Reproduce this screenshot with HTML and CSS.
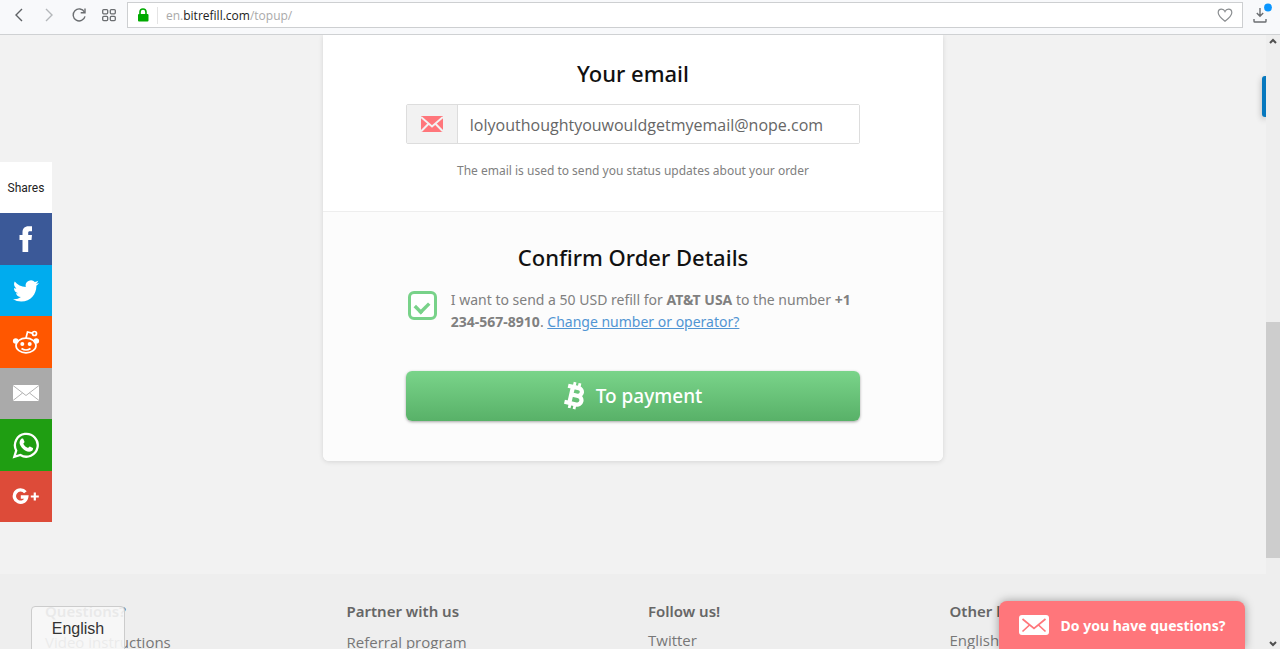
FILE: index.html
```html
<!DOCTYPE html>
<html lang="en">
<head>
<meta charset="utf-8">
<title>Bitrefill top up</title>
<link rel="stylesheet" href="styles.css">
</head>
<body>
<header class="toolbar">
  <nav class="nav-buttons" aria-label="Browser">
    <button class="tool" aria-label="Back"><svg width="16" height="16" viewBox="0 0 16 16"><path d="M11 2 5 8l6 6" fill="none" stroke="#5f6265" stroke-width="1.4"/></svg></button>
    <button class="tool" aria-label="Forward"><svg width="16" height="16" viewBox="0 0 16 16"><path d="m5 2 6 6-6 6" fill="none" stroke="#b4b7ba" stroke-width="1.4"/></svg></button>
    <button class="tool" aria-label="Reload"><svg width="16" height="16" viewBox="0 0 16 16"><path d="M13.4 5A6 6 0 1 0 14 9.3" fill="none" stroke="#6b6e71" stroke-width="1.4"/><path d="M14 1.5v4.300H9.700" fill="none" stroke="#6b6e71" stroke-width="1.4"/></svg></button>
    <button class="tool" aria-label="Speed dial"><svg width="16" height="16" viewBox="0 0 16 16" fill="none" stroke="#6b6e71" stroke-width="1.3"><rect x="1.700" y="2.600" width="5" height="4.200" rx="1"/><rect x="9.300" y="2.600" width="5" height="4.200" rx="1"/><rect x="1.700" y="9.400" width="5" height="4.200" rx="1"/><rect x="9.300" y="9.400" width="5" height="4.200" rx="1"/></svg></button>
  </nav>
  <div class="address">
    <svg width="12" height="14" viewBox="0 0 12 14"><path d="M3 7V4a3 3 0 0 1 6 0v3" fill="none" stroke="#0a0" stroke-width="1.6"/><rect x="1" y="6" width="10.500" height="7.500" rx="1" fill="#0a0"/></svg>
    <span class="url">en.<b>bitrefill.com</b>/topup/</span>
    <button class="tool" aria-label="Bookmark"><svg width="16" height="16" viewBox="0 0 16 16"><path d="M8 14.300C4.500 11.500 1.200 8.800 1.200 5.700 1.200 3.600 2.700 2.200 4.500 2.200 6 2.200 7.300 3 8 4.500 8.700 3 10 2.200 11.500 2.200c1.800 0 3.300 1.400 3.300 3.500 0 3.100-3.300 5.800-6.800 8.600z" fill="none" stroke="#8b8e91" stroke-width="1.2"/></svg></button>
  </div>
  <button class="tool downloads" aria-label="Downloads"><svg width="22" height="24" viewBox="0 0 22 24"><path d="M8 5v8M4.800 10 8 13.200 11.200 10M2 16v2.200q0 .8.800.8h10.400q.8 0 .8-.8V16" fill="none" stroke="#6b6e71" stroke-width="1.4"/><circle cx="16" cy="4.500" r="3.900" fill="#0a96ff"/></svg></button>
</header>

<div class="window">
  <div class="page">
    <main class="main">
      <form class="card">
        <section class="section">
          <h2><label for="email">Your email</label></h2>
          <div class="field">
            <span class="field-icon"><svg width="22" height="16" viewBox="0 0 22 16"><path d="M0 0h22v16H0z" fill="#ff767b"/><path d="M0 1 11 10.500 22 1M0 15.500 7.300 8M22 15.500 14.700 8" fill="none" stroke="#f2f2f2" stroke-width="2"/></svg></span>
            <input class="email" id="email" type="email" value="lolyouthoughtyouwouldgetmyemail@nope.com">
          </div>
          <p class="help">The email is used to send you status updates about your order</p>
        </section>
        <section class="section confirm">
          <h2>Confirm Order Details</h2>
          <div class="agree">
            <input class="check" id="agree" type="checkbox" checked>
            <p><label for="agree">I want to send a 50 USD refill for <b>AT&amp;T USA</b> to the number <b>+1 234-567-8910</b>.</label> <a href="#number">Change number or operator?</a></p>
          </div>
          <button class="pay" type="button">
            <svg width="22" height="30" viewBox="0 0 22 30"><g transform="rotate(13 11 15)" fill="none" stroke="#fff"><path d="M8 1.500v5M13 1.500v5M8 23v5M13 23v5" stroke-width="2.800"/><path d="M2 6.500H13a3.800 3.800 0 0 1 0 7.800H7M13 14.300h1a4.300 4.300 0 0 1 0 8.700H2M7 6.500V23" stroke-width="4.200"/></g></svg>
            <span>To payment</span>
          </button>
        </section>
      </form>
    </main>
    <footer class="footer">
      <section><h3>Questions?</h3><a class="low" href="#video">Video instructions</a></section>
      <section><h3>Partner with us</h3><a class="low" href="#referral">Referral program</a></section>
      <section><h3>Follow us!</h3><a href="#twitter">Twitter</a></section>
      <section><h3>Other languages</h3><a href="#english">English</a></section>
    </footer>

    <aside class="share" aria-label="Shares">
      <span class="share-label">Shares</span>
      <a class="facebook" href="#facebook" aria-label="Facebook"><svg width="28" height="28" viewBox="0 0 28 28"><path d="M10.500 27V15H7.500v-5h3V7.500C10.500 3.500 12.700 1.300 16.500 1.300H20v5h-2.200c-1.300 0-1.600.600-1.600 1.700v2h3.800l-.5 5h-3.300v12z" fill="#fff"/></svg></a>
      <a class="twitter" href="#tweet" aria-label="Twitter"><svg width="26" height="26" viewBox="0 0 24 24"><path d="M23.950 4.570a10 10 0 0 1-2.820.770 4.960 4.960 0 0 0 2.160-2.720c-.950.550-2 .960-3.130 1.180a4.920 4.920 0 0 0-8.380 4.480C7.690 8.100 4.070 6.130 1.640 3.160a4.820 4.820 0 0 0-.670 2.480c0 1.710.870 3.210 2.190 4.100a4.900 4.900 0 0 1-2.230-.620v.060a4.920 4.920 0 0 0 3.950 4.830 5 5 0 0 1-2.210.080 4.940 4.940 0 0 0 4.600 3.420A9.870 9.870 0 0 1 0 19.540a14 14 0 0 0 7.550 2.210c9.050 0 14-7.500 14-13.980 0-.210 0-.420-.020-.630a9.940 9.940 0 0 0 2.460-2.550z" fill="#fff"/></svg></a>
      <a class="reddit" href="#reddit" aria-label="Reddit"><svg width="28" height="28" viewBox="0 0 28 28"><g fill="none" stroke="#fff" stroke-width="1.700"><ellipse cx="14" cy="17.500" rx="10" ry="7.300"/><path d="M14 10l1.500-6 5.500 1.300"/><circle cx="22.500" cy="5.500" r="2"/><path d="M9.500 20.500q4.500 3 9 0"/></g><g fill="#fff"><circle cx="3.700" cy="13" r="2.800"/><circle cx="24.300" cy="13" r="2.800"/><circle cx="10.300" cy="16" r="2"/><circle cx="17.700" cy="16" r="2"/></g></svg></a>
      <a class="mail" href="#mail" aria-label="Email"><svg width="26" height="16" viewBox="0 0 26 16"><path d="M0 0h26v16H0z" fill="#fff"/><path d="M0 .5 13 10.500 26 .5M0 15.500 9.500 8M26 15.500 16.500 8" fill="none" stroke="#aaa" stroke-width=".9"/></svg></a>
      <a class="whatsapp" href="#whatsapp" aria-label="WhatsApp"><svg width="28" height="28" viewBox="0 0 28 28"><path d="M2.300 25.800 4.200 19.500A11.400 11.400 0 1 1 8.400 24z" fill="none" stroke="#fff" stroke-width="2.300"/><path d="M8.200 9.200c.8-1.500 2-2 3-1.400l1.300 3c.2.600-.8 1.500-1.200 2 1.200 2.300 2.700 3.500 4.800 4.300.6-.6 1.200-1.700 1.800-1.600l3 1.400c.5.300-.1 2.200-.8 2.800-3.200 2.300-7.200.100-9.400-2.200-2-2-4.200-5.200-2.500-8.300z" fill="#fff"/></svg></a>
      <a class="google" href="#google" aria-label="Google Plus"><svg width="28" height="20" viewBox="0 0 28 20"><path d="M13.400 6.200A6.200 6.200 0 1 0 14.700 11H8.800" fill="none" stroke="#fff" stroke-width="3.400"/><path d="M22.800 6.500v8M18.800 10.500h8" stroke="#fff" stroke-width="2.200"/></svg></a>
    </aside>
    <span class="tab"></span>
    <button class="language">English</button>
    <button class="chat"><svg width="30" height="20" viewBox="0 0 30 20"><rect width="30" height="20" rx="3" fill="#fff"/><path d="M3.500 4 15 13.500 26.500 4M3.500 16.500 10.500 10M26.500 16.500 19.500 10" fill="none" stroke="#ff767b" stroke-width="1.700"/></svg><span>Do you have questions?</span></button>
  </div>
  <div class="scrollbar" aria-hidden="true">
    <svg width="8" height="7" viewBox="0 0 8 7"><path d="M1 5 4 2l3 3" fill="none" stroke="#505050" stroke-width="2"/></svg>
    <div class="track"><div class="thumb"></div></div>
    <svg width="8" height="7" viewBox="0 0 8 7"><path d="m1 2 3 3 3-3" fill="none" stroke="#505050" stroke-width="2"/></svg>
  </div>
</div>
</body>
</html>
```
FILE: styles.css
```css
* { box-sizing: border-box; }
body {
  margin: 0;
  height: 100vh;
  display: flex;
  flex-direction: column;
  overflow: hidden;
  font-family: "Noto Sans", sans-serif;
  font-size: 14px;
  color: #808080;
  background: #f2f2f2;
}
h2, h3, p { margin: 0; }
button { font: inherit; border: 0; cursor: pointer; }
svg { display: block; flex: none; }

.toolbar {
  display: flex;
  align-items: center;
  flex: none;
  height: 35px;
  padding: 0 6px 4px 11px;
  background: #f8f9fb;
  border-bottom: 1px solid #cfd1d3;
}
.nav-buttons { display: flex; gap: 14px; margin-right: 10px; }
.tool { padding: 0; background: none; }
.address {
  flex: 1;
  display: flex;
  align-items: center;
  height: 26px;
  padding: 0 9px;
  background: #fff;
  border: 1px solid #cdcfd1;
}
.url {
  flex: 1;
  margin-left: 8px;
  padding-left: 8px;
  border-left: 1px solid #e4e4e4;
  font-family: "Open Sans", sans-serif;
  font-size: 12px;
  line-height: 17px;
  color: #aaa;
}
.url b { font-weight: 400; color: #222; }
.downloads { margin-left: 9px; }

.window { flex: 1; display: flex; min-height: 0; }
.page {
  position: relative;
  flex: 1;
  display: flex;
  flex-direction: column;
  overflow: hidden;
}
.main { flex: none; padding-bottom: 113px; }
.card {
  width: 49%;
  margin: 0 auto;
  background: #fff;
  border-radius: 0 0 6px 6px;
  box-shadow: 0 1px 5px rgba(0, 0, 0, .12);
}
.section { padding: 22px 83px 30px; }
.confirm {
  padding: 29px 83px 40px;
  background: #fcfcfc;
  border-top: 1px solid #eee;
  border-radius: 0 0 6px 6px;
}
h2 {
  font-size: 22px;
  line-height: 32px;
  font-weight: 500;
  text-align: center;
  color: #111;
}
.field {
  display: flex;
  height: 40px;
  margin-top: 15px;
  border: 1px solid #ddd;
  border-radius: 2px;
}
.field-icon {
  display: flex;
  justify-content: center;
  align-items: center;
  width: 51px;
  background: #f2f2f2;
  border-right: 1px solid #ddd;
}
.email {
  flex: 1;
  min-width: 0;
  padding: 1px 12px 0;
  border: 0;
  outline: 0;
  font: 16px "Open Sans", sans-serif;
  color: #666;
}
.help { margin-top: 17px; font-size: 12px; line-height: 20px; text-align: center; }
.agree { display: flex; align-items: flex-start; gap: 14px; margin-top: 16px; padding-left: 2px; }
.agree p { line-height: 22px; }
.agree a { color: #5195d3; }
.check {
  appearance: none;
  display: flex;
  justify-content: center;
  flex: none;
  width: 29px;
  height: 29px;
  margin: 2px 0 0;
  border: 3px solid #78d289;
  border-radius: 6px;
  background: #fff;
}
.check:checked::before {
  content: "";
  width: 8px;
  height: 12px;
  margin-top: 4px;
  border: solid #78d289;
  border-width: 0 4px 4px 0;
  transform: rotate(45deg) scale(.85);
}
.pay {
  display: flex;
  justify-content: center;
  align-items: center;
  gap: 10px;
  width: 100%;
  height: 50px;
  margin-top: 38px;
  border-radius: 6px;
  background: linear-gradient(#7ad48a, #58b168);
  box-shadow: 0 1px 3px rgba(0, 0, 0, .35);
  color: #fff;
  font-size: 19px;
  font-weight: 500;
}

.footer {
  flex: 1;
  display: grid;
  grid-template-columns: repeat(4, 1fr);
  padding: 25px 15px 0 45px;
  background: #eee;
  color: #777;
}
.footer h3 { font-size: 15px; line-height: 24px; font-weight: 600; color: #666; }
.footer a { display: block; padding-top: 5px; font: 15px/24px "Open Sans", sans-serif; color: inherit; text-decoration: none; }
.footer .low { padding-top: 7px; }

.share {
  position: absolute;
  left: 0;
  top: 127px;
  display: grid;
  grid-template-rows: repeat(7, 1fr);
  width: 52px;
  height: 360px;
}
.share > * { display: flex; align-items: center; justify-content: center; }
.share-label { background: #fff; font: 12px Roboto, sans-serif; color: #222; }
.facebook { background: #3b5998; }
.twitter { background: #00acee; }
.reddit { background: #ff5700; }
.mail { background: #aaa; }
.whatsapp { background: #1f9e12; }
.google { background: #dd4b39; }

.tab {
  position: absolute;
  top: 41px;
  right: 0;
  width: 4px;
  height: 41px;
  border-radius: 3px 0 0 3px;
  background: #0678be;
  box-shadow: 0 2px 6px rgba(0, 0, 0, .3);
}
.language {
  position: absolute;
  left: 31px;
  bottom: -2px;
  width: 94px;
  height: 45px;
  border: 1px solid #ccc;
  border-radius: 4px 4px 0 0;
  background: rgba(247, 247, 247, .9);
  font: 16px "Liberation Sans", sans-serif;
  color: #333;
}
.chat {
  position: absolute;
  right: 21px;
  bottom: 0;
  display: flex;
  align-items: center;
  justify-content: center;
  gap: 12px;
  width: 246px;
  height: 48px;
  border-radius: 8px 8px 0 0;
  background: #ff767b;
  box-shadow: 0 0 10px rgba(0, 0, 0, .35);
  color: #fff;
  font-size: 14px;
  font-weight: 700;
}
.scrollbar {
  flex: none;
  display: flex;
  flex-direction: column;
  align-items: center;
  width: 14px;
  padding: 3px 0 2px;
  background: #eee;
}
.track { align-self: stretch; flex: 1; padding-top: 277px; }
.thumb { height: 236px; background: #cdcdcd; }
```
